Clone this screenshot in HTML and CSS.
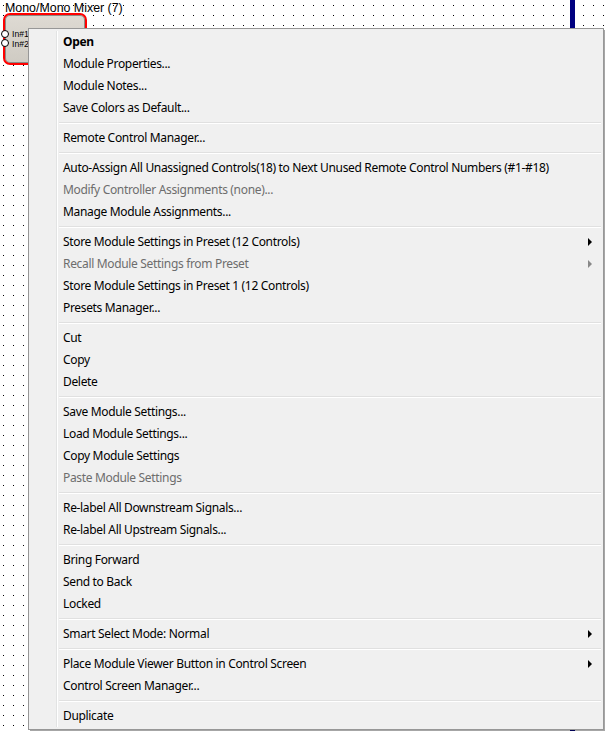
FILE: index.html
```html
<!DOCTYPE html>
<html>
<head>
<meta charset="utf-8">
<link rel="stylesheet" href="styles.css">
</head>
<body>
<div class="canvas">
  <div class="bus-line"></div>

  <div class="module">
    <div class="module-title">Mono/Mono Mixer (7)</div>
    <div class="module-body"></div>
    <div class="pin pin-1"></div>
    <div class="pin pin-2"></div>
    <div class="pin-labels">In#1<br>In#2</div>
  </div>

  <div class="menu">
    <div class="item bold">Open</div>
    <div class="item">Module Properties...</div>
    <div class="item">Module Notes...</div>
    <div class="item">Save Colors as Default...</div>
    <div class="sep"></div>
    <div class="item">Remote Control Manager...</div>
    <div class="sep"></div>
    <div class="item">Auto-Assign All Unassigned Controls(18) to Next Unused Remote Control Numbers (#1-#18)</div>
    <div class="item disabled">Modify Controller Assignments (none)...</div>
    <div class="item">Manage Module Assignments...</div>
    <div class="sep"></div>
    <div class="item sub">Store Module Settings in Preset (12 Controls)</div>
    <div class="item sub disabled">Recall Module Settings from Preset</div>
    <div class="item">Store Module Settings in Preset 1 (12 Controls)</div>
    <div class="item">Presets Manager...</div>
    <div class="sep"></div>
    <div class="item">Cut</div>
    <div class="item">Copy</div>
    <div class="item">Delete</div>
    <div class="sep"></div>
    <div class="item">Save Module Settings...</div>
    <div class="item">Load Module Settings...</div>
    <div class="item">Copy Module Settings</div>
    <div class="item disabled">Paste Module Settings</div>
    <div class="sep"></div>
    <div class="item">Re-label All Downstream Signals...</div>
    <div class="item">Re-label All Upstream Signals...</div>
    <div class="sep"></div>
    <div class="item">Bring Forward</div>
    <div class="item">Send to Back</div>
    <div class="item">Locked</div>
    <div class="sep"></div>
    <div class="item sub">Smart Select Mode: Normal</div>
    <div class="sep"></div>
    <div class="item sub">Place Module Viewer Button in Control Screen</div>
    <div class="item">Control Screen Manager...</div>
    <div class="sep"></div>
    <div class="item">Duplicate</div>
  </div>
</div>
</body>
</html>
```

FILE: styles.css
```css
html, body {
  margin: 0;
  padding: 0;
  background: #ffffff;
  overflow: hidden;
}

.canvas {
  position: relative;
  width: 605px;
  height: 731px;
  background-color: #ffffff;
  overflow: hidden;
}

/* dotted layout grid */
.canvas::before {
  content: "";
  position: absolute;
  inset: 0;
  background-image: radial-gradient(circle at 0.5px 0.5px, #000 0.7px, transparent 0.8px);
  background-size: 10px 10px;
  background-position: 3px 5px;
}

.bus-line {
  position: absolute;
  left: 570px;
  top: 0;
  width: 5px;
  height: 731px;
  background: #000080;
}

/* processing module on the canvas */
.module {
  position: absolute;
  left: 0;
  top: 0;
  width: 110px;
  height: 70px;
  font-family: "Liberation Sans", Arial, sans-serif;
}

.module-title {
  position: absolute;
  left: 5px;
  top: 2px;
  font-size: 12.4px;
  line-height: 13px;
  color: #000;
  white-space: nowrap;
}

.module-body {
  position: absolute;
  left: 3px;
  top: 13px;
  width: 80px;
  height: 48px;
  border: 2px solid #ff0000;
  border-radius: 7px;
  background: linear-gradient(#dedad3, #cfcbc3);
  box-shadow: inset 0 0 0 1px #8c8a85;
}

.pin {
  position: absolute;
  left: 1px;
  width: 6px;
  height: 6px;
  border: 1px solid #000;
  border-radius: 50%;
  background: #fff;
}

.pin-1 { top: 30px; }
.pin-2 { top: 39px; }

.pin-labels {
  position: absolute;
  left: 12px;
  top: 29px;
  font-size: 8.6px;
  line-height: 10px;
  color: #000;
  white-space: nowrap;
}

/* context menu */
.menu {
  position: absolute;
  left: 28px;
  top: 28px;
  width: 570px;
  padding: 2px;
  border: 1px solid #979797;
  background: #f0f0f0;
  box-shadow: 2px 2px 0 rgba(0, 0, 0, 0.35);
  font-family: "Noto Sans", "Segoe UI", sans-serif;
  font-size: 12px;
  letter-spacing: -0.33px;
  color: #000;
}

.menu::before {
  content: "";
  position: absolute;
  left: 27px;
  top: 2px;
  bottom: 2px;
  width: 1px;
  background: #e2e3e3;
  border-right: 1px solid #ffffff;
}

.item {
  position: relative;
  height: 22px;
  line-height: 22px;
  padding-left: 32px;
  white-space: nowrap;
}

.bold {
  font-weight: bold;
}

.disabled {
  color: #6d6d6d;
}

.sub::after {
  content: "";
  position: absolute;
  right: 9px;
  top: 7px;
  border-left: 4px solid #000;
  border-top: 4px solid transparent;
  border-bottom: 4px solid transparent;
}

.sub.disabled::after {
  border-left-color: #888;
}

.sep {
  height: 8px;
  margin-left: 28px;
  position: relative;
}

.sep::before {
  content: "";
  position: absolute;
  left: 0;
  right: 0;
  top: 3px;
  height: 1px;
  background: #e0e0e0;
  border-bottom: 1px solid #ffffff;
}
```
